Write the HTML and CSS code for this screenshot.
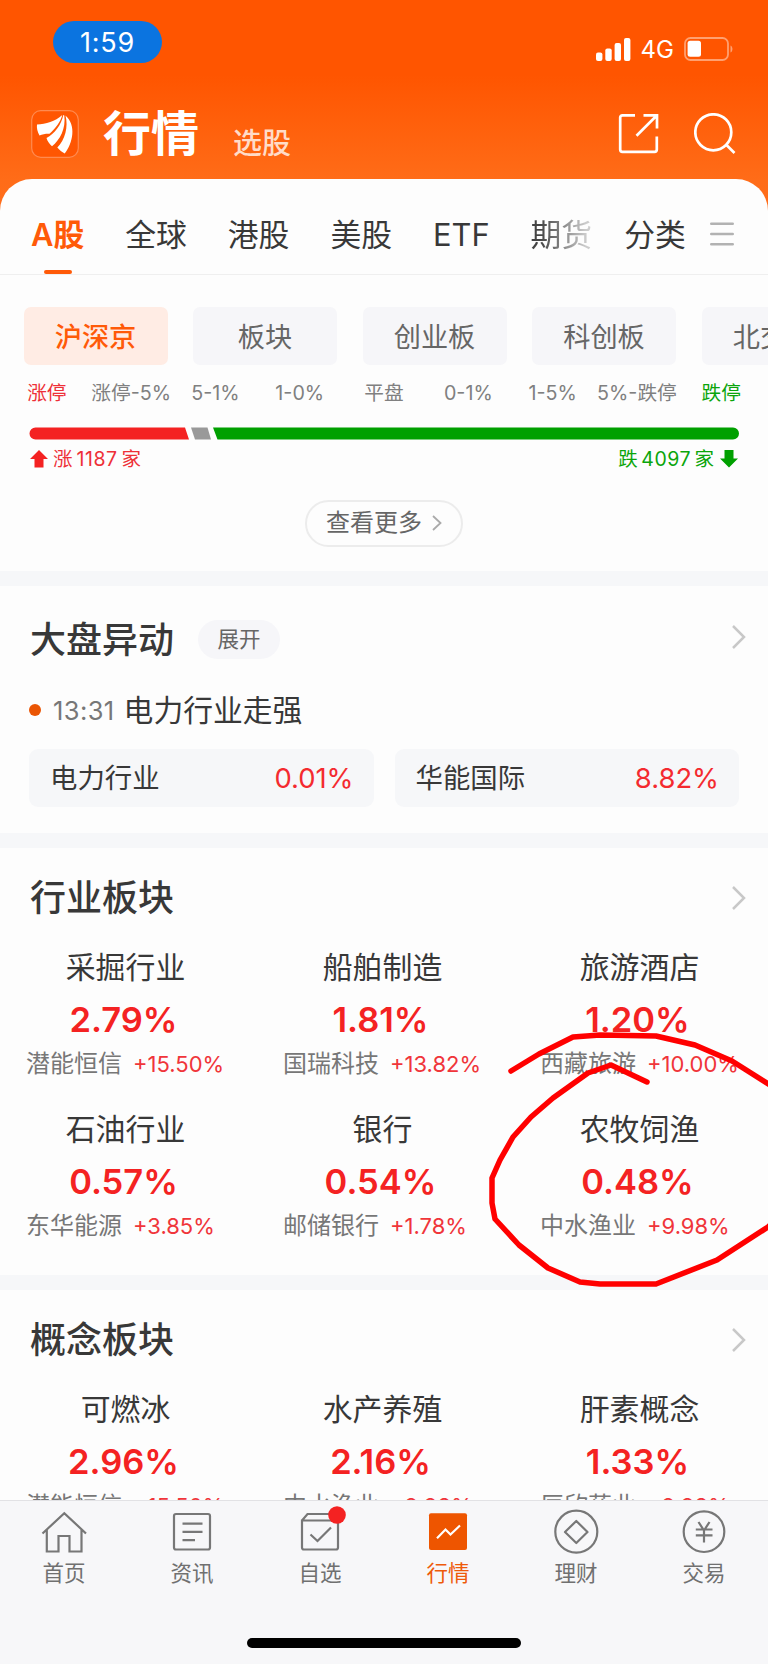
FILE: index.html
```
<!DOCTYPE html>
<html lang="zh-CN">
<head>
    <meta charset="UTF-8">
    <meta name="viewport" content="width=device-width, initial-scale=1.0">
    <title>行情</title>
    <link rel="stylesheet" href="styles.css">
</head>
<body>
    <div class="app">
        <!-- Status bar -->
        <div class="status">
            <span class="clock">1:59</span>
            <div class="status-right">
                <svg class="signal" width="35" height="23" viewBox="0 0 35 23" fill="#fff">
                    <rect x="0" y="14.5" width="6.4" height="8.5" rx="2"/>
                    <rect x="9.3" y="10.5" width="6.4" height="12.5" rx="2"/>
                    <rect x="18.6" y="5" width="6.4" height="18" rx="2"/>
                    <rect x="28" y="0" width="6.4" height="23" rx="2"/>
                </svg>
                <span class="network">4G</span>
                <svg width="50" height="24" viewBox="0 0 50 24">
                    <rect x="1" y="1" width="43" height="22" rx="5.5" fill="none" stroke="#ffa070" stroke-width="1.8"/>
                    <rect x="3.6" y="3.8" width="13.4" height="16" rx="2.5" fill="#fff"/>
                    <path d="M46.5 8.5c2.6 1 2.6 6 0 7z" fill="#ffa070"/>
                </svg>
            </div>
        </div>

        <!-- Title bar -->
        <div class="titlebar">
            <svg class="logo" width="48" height="48" viewBox="0 0 48 48">
                <rect x="0.7" y="0.7" width="46.6" height="46.6" rx="9" fill="#ff5602" stroke="#ff8a50" stroke-width="1.2"/>
                <g fill="#fff">
                    <path d="M31.300 5C24 11.500 15 14 6 14.500C5.500 18 6.500 22 8.500 25.500C11.500 24 15.500 23.500 18.500 23.700C24.500 18.500 29.500 12 31.300 5Z"/>
                    <path d="M32.300 5C30.500 14.500 23.500 24 15.500 28C16.500 31.500 18.500 34 21 36.200C29 30 35 18.500 33.300 5.500Z"/>
                    <path d="M34.500 5.500C37.500 17 34 30 26.300 37.500C28.500 40 31 42 33.700 43.500C42 33 45.500 15 34.500 5.500Z"/>
                </g>
            </svg>
            <h1 class="title">行情</h1>
            <span class="subtitle">选股</span>
            <svg class="share" width="42" height="42" viewBox="0 0 42 42" fill="none" stroke="#fff" stroke-width="2.7">
                <path d="M17 2.300H4.500Q2.200 2.300 2.200 4.600V36.500Q2.200 38.800 4.500 38.800H36.500Q38.800 38.800 38.800 36.500V23.500"/>
                <path d="M25.500 2.300H39V15.500M38.500 2.800L18.500 22.700"/>
            </svg>
            <svg class="search" width="42" height="42" viewBox="0 0 42 42" fill="none" stroke="#fff" stroke-width="2.7">
                <circle cx="19.300" cy="19.300" r="18"/>
                <path d="M32 31.500L40.500 40"/>
            </svg>
        </div>

        <div class="panel">
            <!-- Market tabs -->
            <div class="tabs">
                <span class="tab tab-active">A股</span>
                <span class="tab">全球</span>
                <span class="tab">港股</span>
                <span class="tab">美股</span>
                <span class="tab">ETF</span>
                <span class="tab tab-fade">期货</span>
                <span class="tab tab-last">分类</span>
                <svg class="menu" width="24" height="24" viewBox="0 0 24 24" stroke="#b2b2b2" stroke-width="2.600" stroke-linecap="round">
                    <path d="M1.300 1.700H22.700M1.300 12H22.700M1.300 22.300H22.700"/>
                </svg>
            </div>

            <div class="chips">
                <span class="chip chip-active">沪深京</span>
                <span class="chip">板块</span>
                <span class="chip">创业板</span>
                <span class="chip">科创板</span>
                <span class="chip">北交所</span>
            </div>

            <!-- Rise / fall distribution -->
            <div class="ranges">
                <span class="up">涨停</span>
                <span>涨停-5%</span>
                <span>5-1%</span>
                <span>1-0%</span>
                <span>平盘</span>
                <span>0-1%</span>
                <span>1-5%</span>
                <span>5%-跌停</span>
                <span class="down">跌停</span>
            </div>
            <svg class="ratio" width="710" height="13" viewBox="0 0 710 13">
                <path d="M6.500 0.500H156L160 12.500H6.500A6 6 0 0 1 6.500 0.500Z" fill="#f42222"/>
                <path d="M162 0.500H178.500L182 12.500H166Z" fill="#999"/>
                <path d="M184 0.500H704A6 6 0 0 1 704 12.500H188.500Z" fill="#00a000"/>
            </svg>
            <div class="counts">
                <span class="count up">
                    <svg width="18" height="18" viewBox="0 0 18 18" fill="#f42222"><path d="M9 0L18 9H13.500V17.500H4.500V9H0Z"/></svg>
                    <span>涨</span><span class="num num-up">1187</span><span>家</span>
                </span>
                <span class="count down">
                    <span>跌</span><span class="num">4097</span><span>家</span>
                    <svg class="arrow-down" width="18" height="18" viewBox="0 0 18 18" fill="#00a000"><path d="M9 17.500L0 8.500H4.500V0H13.500V8.500H18Z"/></svg>
                </span>
            </div>
            <div class="more">
                <span>查看更多</span>
                <svg width="10" height="16" viewBox="0 0 10 16" fill="none" stroke="#aaa" stroke-width="1.800"><path d="M1 1L8.500 8L1 15"/></svg>
            </div>

            <!-- Market movement -->
            <section class="section moves">
                <div class="section-head">
                    <h2>大盘异动</h2>
                    <span class="expand">展开</span>
                    <svg class="chevron" width="16" height="26" viewBox="0 0 16 26"><path d="M2 2L13 13L2 24"/></svg>
                </div>
                <div class="event">
                    <i class="dot"></i>
                    <span class="time">13:31</span>
                    <span class="event-name">电力行业走强</span>
                </div>
                <div class="cards">
                    <div class="card"><span>电力行业</span><span class="card-pct">0.01%</span></div>
                    <div class="card"><span>华能国际</span><span class="card-pct">8.82%</span></div>
                </div>
            </section>

            <!-- Industry sectors -->
            <section class="section industry">
                <div class="section-head">
                    <h2>行业板块</h2>
                    <svg class="chevron" width="16" height="26" viewBox="0 0 16 26"><path d="M2 2L13 13L2 24"/></svg>
                </div>
                <div class="grid">
                    <div class="cell">
                        <div class="name">采掘行业</div>
                        <div class="pct">2.79%</div>
                        <div class="lead">潜能恒信<span>+15.50%</span></div>
                    </div>
                    <div class="cell">
                        <div class="name">船舶制造</div>
                        <div class="pct">1.81%</div>
                        <div class="lead">国瑞科技<span>+13.82%</span></div>
                    </div>
                    <div class="cell">
                        <div class="name">旅游酒店</div>
                        <div class="pct">1.20%</div>
                        <div class="lead">西藏旅游<span>+10.00%</span></div>
                    </div>
                    <div class="cell">
                        <div class="name">石油行业</div>
                        <div class="pct">0.57%</div>
                        <div class="lead">东华能源<span>+3.85%</span></div>
                    </div>
                    <div class="cell">
                        <div class="name">银行</div>
                        <div class="pct">0.54%</div>
                        <div class="lead">邮储银行<span>+1.78%</span></div>
                    </div>
                    <div class="cell">
                        <div class="name">农牧饲渔</div>
                        <div class="pct">0.48%</div>
                        <div class="lead">中水渔业<span>+9.98%</span></div>
                    </div>
                </div>
            </section>

            <!-- Concept sectors -->
            <section class="section concept">
                <div class="section-head">
                    <h2>概念板块</h2>
                    <svg class="chevron" width="16" height="26" viewBox="0 0 16 26"><path d="M2 2L13 13L2 24"/></svg>
                </div>
                <div class="grid">
                    <div class="cell">
                        <div class="name">可燃冰</div>
                        <div class="pct">2.96%</div>
                        <div class="lead">潜能恒信<span>+15.50%</span></div>
                    </div>
                    <div class="cell">
                        <div class="name">水产养殖</div>
                        <div class="pct">2.16%</div>
                        <div class="lead">中水渔业<span>+9.98%</span></div>
                    </div>
                    <div class="cell">
                        <div class="name">肝素概念</div>
                        <div class="pct">1.33%</div>
                        <div class="lead">辰欣药业<span>+9.98%</span></div>
                    </div>
                </div>
            </section>
        </div>

        <!-- Bottom navigation -->
        <div class="navbar">
            <div class="nav-items">
                <div class="nav-item">
                    <svg width="46" height="46" viewBox="0 0 46 46">
                        <path d="M1.500 23.500L23.300 3.200L45 23.500M5.800 20V41.500H17.500V26H28.500V41.500H40.500V20"/>
                    </svg>
                    <span>首页</span>
                </div>
                <div class="nav-item">
                    <svg width="46" height="46" viewBox="0 0 46 46">
                        <rect x="5" y="4" width="36" height="35.500" rx="2"/>
                        <path d="M13.500 13.700H33.500M13.500 21.800H33.500M13.500 30.200H26"/>
                    </svg>
                    <span>资讯</span>
                </div>
                <div class="nav-item">
                    <svg width="46" height="46" viewBox="0 0 46 46">
                        <path d="M5 10.500V37.500Q5 39.500 7 39.500H39Q41 39.500 41 37.500V10.500ZM5 10.500L10.500 4H36L41 10.500M13.500 24.500L20.500 31L34 17.500"/>
                        <circle class="badge" cx="40" cy="5" r="8.800"/>
                    </svg>
                    <span>自选</span>
                </div>
                <div class="nav-item nav-active">
                    <svg width="46" height="46" viewBox="0 0 46 46">
                        <rect class="nav-fill" x="4" y="3.200" width="38" height="36.800" rx="2"/>
                        <path class="nav-line" d="M12 28.200L20.500 19.500L25.500 24.500L35 15.500"/>
                    </svg>
                    <span>行情</span>
                </div>
                <div class="nav-item">
                    <svg width="46" height="46" viewBox="0 0 46 46">
                        <circle cx="23.300" cy="21.700" r="21"/>
                        <path d="M23.300 11L34.500 22L23.300 33L12 22Z" stroke-linejoin="round"/>
                    </svg>
                    <span>理财</span>
                </div>
                <div class="nav-item">
                    <svg width="46" height="46" viewBox="0 0 46 46">
                        <circle cx="23" cy="21.700" r="20.300"/>
                        <path d="M17.500 12L23 20.500L28.500 12M23 20.500V32.500M14.800 19.500H31.500M14.800 25.300H31.500"/>
                    </svg>
                    <span>交易</span>
                </div>
            </div>
            <div class="home-indicator"></div>
        </div>

        <!-- Hand-drawn mark -->
        <svg class="mark" width="290" height="262" viewBox="0 0 290 262">
            <path d="M33 45L61 28L95 11L122 9L178 10L217 19L254 35L300 64"/>
            <path d="M300 192L290 201L239 234L178 258L122 258L102 256L70 242L41 219L17 193L14 177V152L22 134L35 111L53 91L75 72L110 47L133 39L169 56"/>
        </svg>
    </div>
</body>
</html>
```

FILE: styles.css
```
/* Basic Reset */
* {
    margin: 0;
    padding: 0;
    box-sizing: border-box;
}

body {
    font-family: Inter, "Noto Sans CJK SC", sans-serif;
    color: #383838;
}

svg {
    display: block;
    flex-shrink: 0;
}

.app {
    position: relative;
    display: flex;
    flex-direction: column;
    width: 768px;
    height: 1664px;
    overflow: hidden;
    background: linear-gradient(#ff5500 0, #ff5500 75px, #ff6c18 180px, #ff6e1c 215px);
}

/* Status bar */
.status {
    display: flex;
    justify-content: space-between;
    height: 80px;
    padding: 21px 34px 0 53px;
    color: #fff;
}

.clock {
    width: 109px;
    height: 42px;
    border-radius: 21px;
    background: #0b74e0;
    font-size: 27px;
    line-height: 43px;
    letter-spacing: 0.800px;
    text-align: center;
}

.status-right {
    display: flex;
    align-items: center;
    height: 56px;
}

.network {
    margin: 2px 10px 0 10px;
    font-size: 24px;
    line-height: 24px;
}

/* Title bar */
.titlebar {
    display: flex;
    align-items: center;
    height: 99px;
    padding: 8px 32px 0 31px;
    color: #fff;
}

.title {
    margin-left: 24px;
    font-size: 48px;
    line-height: 60px;
    font-weight: 700;
}

.subtitle {
    margin: 20px 0 0 34px;
    font-size: 29px;
    line-height: 30px;
    font-weight: 500;
    color: #ffdcc8;
}

.share {
    margin-left: auto;
}

.search {
    margin-left: 34px;
}

/* Main panel */
.panel {
    display: flex;
    flex-direction: column;
    flex: 1;
    min-height: 0;
    overflow: hidden;
    border-radius: 32px 32px 0 0;
    background: #fdfdfd;
}

.panel > * {
    flex-shrink: 0;
}

.tabs {
    display: flex;
    gap: 41px;
    height: 96px;
    padding: 36px 0 0 31px;
    border-bottom: 1px solid #efefef;
}

.tab {
    position: relative;
    height: 59px;
    font-size: 30.800px;
    line-height: 40px;
    white-space: nowrap;
}

.tab-active {
    font-weight: 600;
    color: #ff5a08;
}

.tab-active::after {
    content: "";
    position: absolute;
    left: 13px;
    bottom: 0;
    width: 28px;
    height: 4px;
    border-radius: 2px;
    background: #ff5a08;
}

.tab-fade {
    background: linear-gradient(90deg, #444 15%, #ccc 90%);
    -webkit-background-clip: text;
    background-clip: text;
    color: transparent;
}

.tab-last {
    margin-left: -9px;
}

.menu {
    margin: 7px 0 0 -17px;
}

.chips {
    display: flex;
    gap: 25.500px;
    margin: 31.500px 0 0 23.500px;
}

.chip {
    flex: none;
    width: 144px;
    height: 58px;
    border-radius: 7px;
    background: #f6f6f9;
    font-size: 27.200px;
    line-height: 61px;
    text-align: center;
    color: #666;
}

.chip-active {
    background: #ffece4;
    font-weight: 500;
    color: #ff5a08;
}

.up {
    color: #ee3038;
}

.down {
    color: #0ba50b;
}

.ranges {
    display: grid;
    grid-template-columns: repeat(9, 84.300px);
    margin: 17px 0 0 4.700px;
    font-size: 19.700px;
    line-height: 22px;
    text-align: center;
    white-space: nowrap;
}

.ranges span:not(.up):not(.down) {
    color: #808080;
}

.ratio {
    margin: 23px 0 0 29px;
}

.counts {
    display: flex;
    justify-content: space-between;
    margin: 9px 30px 0 30px;
    font-size: 19.500px;
    line-height: 20px;
}

.count {
    display: flex;
    align-items: center;
}

.count.up svg {
    margin-right: 5px;
}

.arrow-down {
    margin-left: 6px;
}

.num {
    margin: 0 3.500px;
    letter-spacing: 0.500px;
}

.num-up {
    margin: 0 4px;
}

.more {
    display: flex;
    align-items: center;
    justify-content: center;
    gap: 10px;
    width: 158px;
    height: 47px;
    margin: 31px auto 0;
    border: 2px solid #ececec;
    border-radius: 24px;
    font-size: 24px;
    line-height: 30px;
    color: #666;
}

/* Sections */
.section {
    border-top: 15px solid #f6f7f9;
}

.section-head {
    display: flex;
    align-items: center;
    padding: 0 21px 0 30px;
}

.section-head h2 {
    font-size: 36px;
    line-height: 40px;
    font-weight: 500;
}

.expand {
    width: 82px;
    height: 39px;
    margin-left: 24px;
    border-radius: 20px;
    background: #f6f6f9;
    font-size: 21.500px;
    line-height: 39px;
    text-align: center;
    color: #666;
}

.chevron {
    margin-left: auto;
    fill: none;
    stroke: #c8c8c8;
    stroke-width: 2.500;
}

.moves {
    height: 262px;
    margin-top: 24px;
    padding-top: 34px;
}

.moves .chevron {
    margin-bottom: 5px;
}

.industry {
    height: 442px;
    padding-top: 30px;
}

.concept {
    padding-top: 30px;
}

.event {
    display: flex;
    align-items: center;
    height: 30px;
    margin: 35px 0 0 29px;
}

.dot {
    width: 12px;
    height: 12px;
    border-radius: 50%;
    background: #ea5504;
}

.time {
    margin: 2px 0 0 12px;
    font-size: 25.500px;
    line-height: 30px;
    letter-spacing: 0.400px;
    color: #777;
}

.event-name {
    margin-left: 9px;
    font-size: 29.800px;
    line-height: 30px;
}

.cards {
    display: grid;
    grid-template-columns: 1fr 1fr;
    gap: 21px;
    margin: 24px 29px 0;
}

.card {
    display: flex;
    justify-content: space-between;
    height: 58px;
    padding: 0 20px 0 21px;
    border-radius: 9px;
    background: #f6f7f9;
    font-size: 27.400px;
    line-height: 59px;
}

.card-pct {
    color: #f42a2f;
}

.grid {
    display: grid;
    grid-template-columns: repeat(3, 257px);
    grid-auto-rows: 162px;
    margin: 29px 0 0 26px;
}

.cell {
    width: 197px;
    text-align: center;
    white-space: nowrap;
}

.name {
    padding-left: 2px;
    font-size: 29.900px;
    line-height: 40px;
}

.pct {
    margin: 12px 2px 0 0;
    font-size: 34.500px;
    line-height: 41px;
    font-weight: 600;
    color: #f42222;
}

.lead {
    margin-top: 9px;
    font-size: 24px;
    line-height: 30px;
    text-align: left;
    color: #777;
}

.lead span {
    margin-left: 11px;
    font-size: 22px;
    color: #f0353a;
}

/* Bottom navigation */
.navbar {
    flex: none;
    height: 164px;
    border-top: 1px solid #e2e2e5;
    background: #f7f7f9;
}

.nav-items {
    display: grid;
    grid-template-columns: repeat(6, 1fr);
    padding-top: 9px;
}

.nav-item {
    display: flex;
    flex-direction: column;
    align-items: center;
    font-size: 21.500px;
    line-height: 26px;
    color: #707070;
}

.nav-item svg {
    overflow: visible;
    fill: none;
    stroke: #777;
    stroke-width: 2.200;
}

.nav-item span {
    margin-top: 4px;
}

.nav-item.nav-active {
    color: #ee5a0a;
}

.nav-item .badge {
    fill: #f42222;
    stroke: none;
}

.nav-item .nav-fill {
    fill: #ee5500;
    stroke: none;
}

.nav-item .nav-line {
    stroke: #fff;
    stroke-width: 2.200;
}

.home-indicator {
    width: 274px;
    height: 10px;
    margin: 52px auto 0;
    border-radius: 5px;
    background: #000;
}

/* Hand-drawn mark over the sector list */
.mark {
    position: absolute;
    left: 478px;
    top: 1026px;
    fill: none;
    stroke: #ff0000;
    stroke-width: 5.500;
    stroke-linecap: round;
    stroke-linejoin: round;
}
```
